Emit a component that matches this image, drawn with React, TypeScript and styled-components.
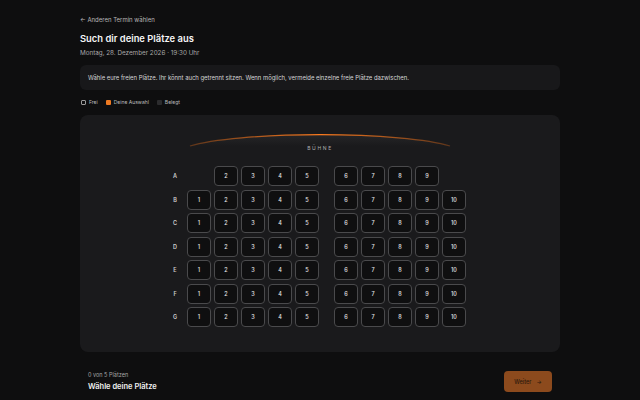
import React from 'react';
import styled, { createGlobalStyle } from 'styled-components';

const Global = createGlobalStyle`
  html, body {
    margin: 0;
    background: #0e0e0f;
    font-family: Inter, "Noto Sans", "Liberation Sans", sans-serif;
    color: #f2f2f2;
  }
`;

const Page = styled.div`
  width: 480px;
  padding: 16px 80px 0;
`;

const BackLink = styled.a`
  display: block;
  font-size: 6px;
  line-height: 8px;
  color: #b8b8b8;
  text-decoration: none;
`;

const Title = styled.h1`
  margin: 8px 0 0;
  font-size: 9.4px;
  line-height: 13px;
  font-weight: 600;
  color: #f5f5f5;
`;

const DateLine = styled.div`
  margin-top: 4px;
  font-size: 6.3px;
  line-height: 9px;
  color: #a8a8a8;
`;

const InfoBox = styled.div`
  margin-top: 7px;
  height: 25px;
  display: flex;
  align-items: center;
  padding: 0 8px;
  background: #18181a;
  border-radius: 6px;
  font-size: 5.9px;
  color: #d6d6d6;
`;

const Legend = styled.div`
  display: flex;
  align-items: center;
  gap: 8px;
  height: 10px;
  margin: 7px 0 8px 1px;
  font-size: 5px;
  color: #bdbdbd;
`;

const LegendItem = styled.span`
  display: flex;
  align-items: center;
  gap: 3px;
`;

const Swatch = styled.span<{ $kind: 'free' | 'mine' | 'taken' }>`
  width: 5px;
  height: 5px;
  border-radius: 1px;
  box-sizing: border-box;
  border: 1px solid ${(p) => (p.$kind === 'free' ? '#9a9a9a' : 'transparent')};
  background: ${(p) =>
    p.$kind === 'mine' ? '#ee7a22' : p.$kind === 'taken' ? '#2c2c2e' : 'transparent'};
`;

const SeatCard = styled.div`
  height: 237px;
  background: #1a1a1c;
  border-radius: 8px;
  display: flex;
  flex-direction: column;
  align-items: center;
`;

const Stage = styled.div`
  margin-top: 18px;
  width: 264px;
  display: flex;
  flex-direction: column;
  align-items: center;
`;

const StageLabel = styled.div`
  margin-top: -2px;
  font-size: 5px;
  letter-spacing: 1.6px;
  color: #b0b0b0;
`;

const Rows = styled.div`
  margin-top: 15px;
  display: flex;
  flex-direction: column;
  gap: 3.5px;
  padding-right: 4px;
`;

const Row = styled.div`
  display: flex;
  align-items: center;
`;

const RowLabel = styled.div`
  width: 10px;
  margin-right: 7px;
  text-align: center;
  font-size: 5.5px;
  font-weight: 600;
  color: #cfcfcf;
`;

const Block = styled.div`
  display: flex;
  gap: 3px;
`;

const Aisle = styled.div`
  width: 15px;
`;

const Seat = styled.button<{ $empty?: boolean }>`
  width: 24px;
  height: 20px;
  padding: 0;
  box-sizing: border-box;
  border-radius: 4px;
  border: 1px solid ${(p) => (p.$empty ? 'transparent' : '#4a4a4c')};
  background: ${(p) => (p.$empty ? 'transparent' : '#0f0f10')};
  visibility: ${(p) => (p.$empty ? 'hidden' : 'visible')};
  font-family: inherit;
  font-size: 5.5px;
  font-weight: 500;
  color: #e6e6e6;
`;

const Footer = styled.div`
  display: flex;
  align-items: center;
  justify-content: space-between;
  padding: 19px 8px 0;
`;

const Counter = styled.div`
  font-size: 5.5px;
  color: #a8a8a8;
`;

const FooterTitle = styled.div`
  margin-top: 4px;
  font-size: 7.5px;
  font-weight: 600;
  color: #f0f0f0;
`;

const NextButton = styled.button`
  width: 48px;
  height: 21px;
  border: none;
  border-radius: 4px;
  background: #8c4a1d;
  color: #2b190c;
  font-family: inherit;
  font-size: 5.5px;
  font-weight: 500;
  display: flex;
  align-items: center;
  justify-content: center;
  gap: 5px;
`;

const rows = ['A', 'B', 'C', 'D', 'E', 'F', 'G'];

function StageArc() {
  return (
    <svg width="264" height="14" viewBox="0 0 264 14">
      <defs>
        <linearGradient id="arc" x1="0" x2="1" y1="0" y2="0">
          <stop offset="0" stopColor="#f97316" stopOpacity="0.3" />
          <stop offset="0.5" stopColor="#fb7a1e" stopOpacity="1" />
          <stop offset="1" stopColor="#f97316" stopOpacity="0.3" />
        </linearGradient>
        <linearGradient id="glow" x1="0" x2="0" y1="0" y2="1">
          <stop offset="0" stopColor="#ffffff" stopOpacity="0.05" />
          <stop offset="1" stopColor="#ffffff" stopOpacity="0" />
        </linearGradient>
      </defs>
      <path d="M2 13 A140 18 0 0 1 262 13 Z" fill="url(#glow)" />
      <path d="M2 13 A140 18 0 0 1 262 13" fill="none" stroke="url(#arc)" strokeWidth="1.3" />
    </svg>
  );
}

export default function App() {
  return (
    <Page>
      <Global />
      <BackLink href="#">← Anderen Termin wählen</BackLink>
      <Title>Such dir deine Plätze aus</Title>
      <DateLine>Montag, 28. Dezember 2026 · 19:30 Uhr</DateLine>
      <InfoBox>
        Wähle eure freien Plätze. Ihr könnt auch getrennt sitzen. Wenn möglich, vermeide einzelne
        freie Plätze dazwischen.
      </InfoBox>
      <Legend>
        <LegendItem>
          <Swatch $kind="free" />
          Frei
        </LegendItem>
        <LegendItem>
          <Swatch $kind="mine" />
          Deine Auswahl
        </LegendItem>
        <LegendItem>
          <Swatch $kind="taken" />
          Belegt
        </LegendItem>
      </Legend>
      <SeatCard>
        <Stage>
          <StageArc />
          <StageLabel>BÜHNE</StageLabel>
        </Stage>
        <Rows>
          {rows.map((r) => (
            <Row key={r}>
              <RowLabel>{r}</RowLabel>
              <Block>
                {[1, 2, 3, 4, 5].map((n) => (
                  <Seat key={n} $empty={r === 'A' && n === 1}>
                    {n}
                  </Seat>
                ))}
              </Block>
              <Aisle />
              <Block>
                {[6, 7, 8, 9, 10].map((n) => (
                  <Seat key={n} $empty={r === 'A' && n === 10}>
                    {n}
                  </Seat>
                ))}
              </Block>
            </Row>
          ))}
        </Rows>
      </SeatCard>
      <Footer>
        <div>
          <Counter>0 von 5 Plätzen</Counter>
          <FooterTitle>Wähle deine Plätze</FooterTitle>
        </div>
        <NextButton>
          Weiter <span>→</span>
        </NextButton>
      </Footer>
    </Page>
  );
}
